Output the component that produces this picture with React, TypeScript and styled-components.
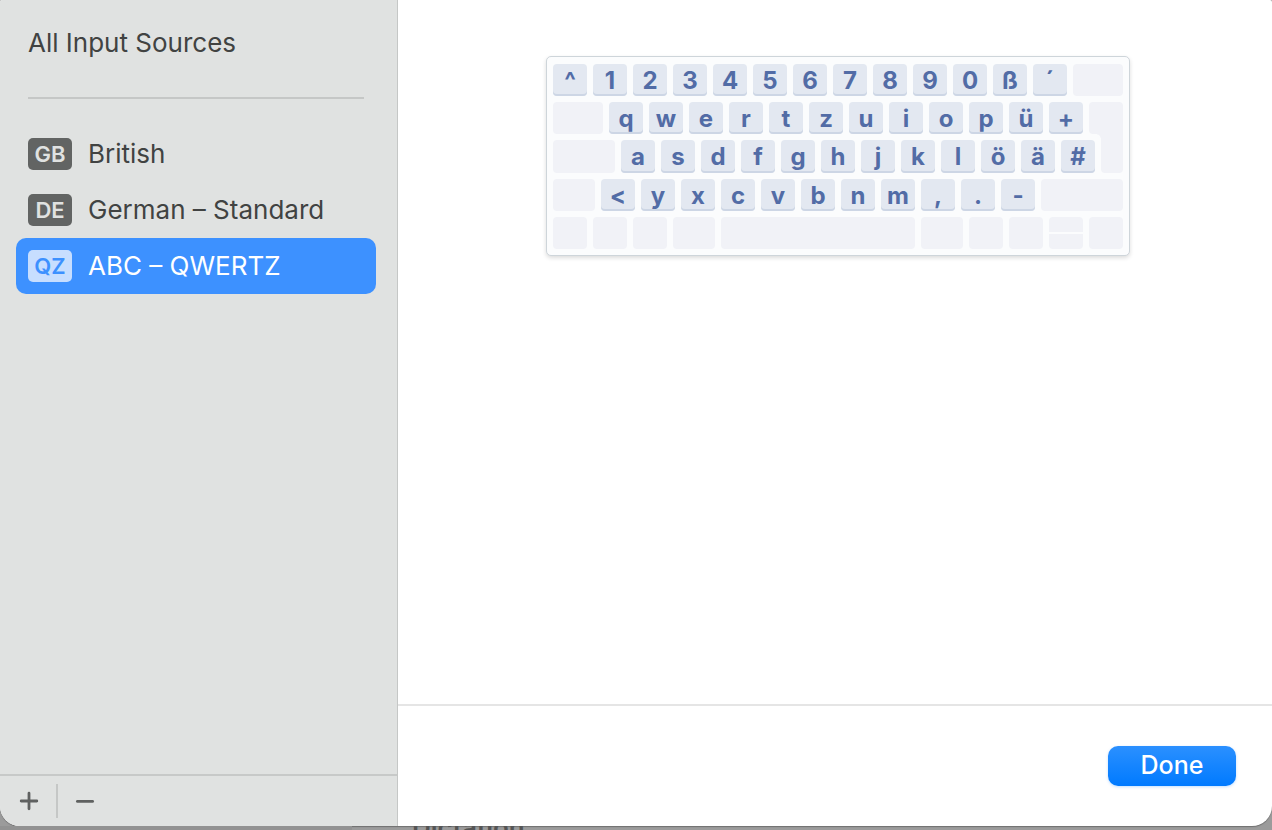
import React from "react";
import styled, { createGlobalStyle } from "styled-components";

const GlobalStyle = createGlobalStyle`
  *, *::before, *::after { box-sizing: border-box; }
  body {
    margin: 0;
    overflow: hidden;
    background: #9b9b9b;
    font-family: Inter, "Liberation Sans", sans-serif;
    color: #414342;
  }
  button { font: inherit; color: inherit; border: 0; margin: 0; padding: 0; background: none; }
`;

const Screen = styled.div`
  display: flex;
  flex-direction: column;
  height: 100vh;
`;

const Sheet = styled.div`
  flex: 1;
  display: flex;
  min-height: 0;
  overflow: hidden;
  background: #fff;
  border-radius: 2px 2px 20px 20px;
  box-shadow: 0 1px 1px #707070;
`;

const Sidebar = styled.aside`
  flex: 0 0 398px;
  display: flex;
  flex-direction: column;
  background: #e0e2e1;
  border-right: 1px solid #c5c7c6;
`;

const SourceNav = styled.nav`
  flex: 1;
  padding: 24px 21px 0 16px;
`;

const AllSources = styled.button`
  display: block;
  padding: 0 12px;
  font-size: 26px;
  line-height: 38px;
`;

const Divider = styled.hr`
  height: 2px;
  margin: 35px 12px 27px;
  border: 0;
  background: #c5c7c6;
`;

const SourceList = styled.ul`
  margin: 0;
  padding: 0;
  list-style: none;
`;

const Source = styled.button<{ $selected?: boolean }>`
  display: flex;
  align-items: center;
  gap: 16px;
  width: 100%;
  height: 56px;
  padding: 0 12px;
  border-radius: 10px;
  font-size: 26px;
  line-height: 32px;
  white-space: nowrap;
  color: ${(p) => (p.$selected ? "#fff" : "inherit")};
  background: ${(p) => (p.$selected ? "#3d91ff" : "none")};
`;

const Badge = styled.span<{ $selected?: boolean }>`
  width: 44px;
  height: 32px;
  border-radius: 5px;
  font-size: 22px;
  font-weight: 600;
  line-height: 32px;
  text-align: center;
  color: ${(p) => (p.$selected ? "#3d91ff" : "#e0e2e1")};
  background: ${(p) => (p.$selected ? "#c7deff" : "#626463")};
`;

const Tools = styled.div`
  display: flex;
  align-items: center;
  height: 52px;
  padding-left: 2px;
  border-top: 2px solid #c7c9c8;
`;

const Tool = styled.button`
  display: flex;
  align-items: center;
  justify-content: center;
  width: 54px;
  height: 50px;
`;

const ToolDivider = styled.span`
  width: 2px;
  height: 34px;
  background: #c5c7c6;
`;

const Main = styled.main`
  flex: 1;
  display: flex;
  flex-direction: column;
  min-width: 0;
`;

const Preview = styled.section`
  flex: 1;
  display: flex;
  justify-content: center;
  align-items: flex-start;
  padding: 56px 0 0 6px;
`;

const Keyboard = styled.div`
  display: flex;
  flex-direction: column;
  gap: 6px;
  width: 584px;
  padding: 7px 6px 6px;
  border: 1px solid #ced5da;
  border-radius: 5px;
  background: #fbfcfd;
  box-shadow: 0 2px 4px rgba(0, 0, 0, 0.14);
`;

const KeyRow = styled.div<{ $height: number }>`
  display: flex;
  gap: 6px;
  height: ${(p) => p.$height}px;
`;

const Key = styled.kbd`
  flex: 0 0 34px;
  border-radius: 4px;
  font-family: inherit;
  font-size: 24px;
  font-weight: 700;
  line-height: 34px;
  text-align: center;
  color: #526ca6;
  background: #e3e8f1;
  box-shadow: inset 0 -2px #cdd6e5;
`;

const BlankKey = styled.span<{ $width?: number }>`
  flex: ${(p) => (p.$width ? `0 0 ${p.$width}px` : "1")};
  border-radius: 4px;
  background: #f1f2f7;
`;

const EnterTop = styled(BlankKey)`
  border-radius: 4px 4px 0 4px;
`;

/* The lower half of the enter key reaches up over the row gap to join the upper half,
   with a rounded inner corner where the two meet. */
const EnterBottom = styled(BlankKey)`
  position: relative;
  border-radius: 0 0 4px 4px;
  &::before {
    content: "";
    position: absolute;
    inset: -6px 0 100% 0;
    background: inherit;
  }
  &::after {
    content: "";
    position: absolute;
    top: -6px;
    right: 100%;
    width: 4px;
    height: 4px;
    background: radial-gradient(circle at 0 100%, transparent 3px, #f1f2f7 4px);
  }
`;

const ArrowPair = styled.span`
  flex: 0 0 34px;
  display: flex;
  flex-direction: column;
  gap: 2px;
`;

const ArrowUp = styled(BlankKey)`
  border-radius: 4px 4px 0 0;
`;

const ArrowDown = styled(BlankKey)`
  border-radius: 0 0 4px 4px;
`;

const Actions = styled.footer`
  display: flex;
  align-items: center;
  justify-content: flex-end;
  height: 122px;
  padding: 0 36px;
  border-top: 2px solid #e5e5e5;
`;

const DoneButton = styled.button`
  width: 128px;
  height: 40px;
  padding-bottom: 2px;
  border-radius: 10px;
  font-size: 25px;
  font-weight: 500;
  line-height: 38px;
  color: #fff;
  background: linear-gradient(#2b90ff, #007aff);
  box-shadow: 0 1px 3px rgba(0, 122, 255, 0.25);
`;

const Behind = styled.div`
  display: flex;
  align-items: center;
  height: 4px;
  overflow: hidden;
`;

const BehindSide = styled.span`
  flex: 0 0 352px;
  height: 4px;
  background: #929292;
`;

const BehindLabel = styled.span`
  padding-left: 60px;
  font-size: 26px;
  font-weight: 600;
  line-height: 32px;
  color: #555;
`;

const sources = [
  { code: "GB", name: "British" },
  { code: "DE", name: "German – Standard" },
  { code: "QZ", name: "ABC – QWERTZ", selected: true },
];

const keys = (text: string) => text.split(" ").map((k) => <Key key={k}>{k}</Key>);

export default function App() {
  return (
    <>
      <GlobalStyle />
      <Screen>
        <Sheet role="dialog" aria-label="Input Sources">
          <Sidebar>
            <SourceNav>
              <AllSources type="button">All Input Sources</AllSources>
              <Divider />
              <SourceList>
                {sources.map((s) => (
                  <li key={s.code}>
                    <Source type="button" $selected={s.selected} aria-pressed={!!s.selected}>
                      <Badge $selected={s.selected}>{s.code}</Badge>
                      {s.name}
                    </Source>
                  </li>
                ))}
              </SourceList>
            </SourceNav>
            <Tools>
              <Tool type="button" aria-label="Add">
                <svg width="20" height="20" viewBox="0 0 20 20" stroke="#5f6160" strokeWidth="2.8" strokeLinecap="round">
                  <path d="M2.2 10H17.8M10 2.2V17.8" />
                </svg>
              </Tool>
              <ToolDivider />
              <Tool type="button" aria-label="Remove">
                <svg width="20" height="20" viewBox="0 0 20 20" stroke="#5f6160" strokeWidth="2.8" strokeLinecap="round">
                  <path d="M2.4 10.4H17.6" />
                </svg>
              </Tool>
            </Tools>
          </Sidebar>
          <Main>
            <Preview aria-label="Keyboard layout">
              <Keyboard>
                <KeyRow $height={32}>
                  {keys("^ 1 2 3 4 5 6 7 8 9 0 ß ´")}
                  <BlankKey />
                </KeyRow>
                <KeyRow $height={32}>
                  <BlankKey $width={50} />
                  {keys("q w e r t z u i o p ü +")}
                  <EnterTop />
                </KeyRow>
                <KeyRow $height={33}>
                  <BlankKey $width={62} />
                  {keys("a s d f g h j k l ö ä #")}
                  <EnterBottom />
                </KeyRow>
                <KeyRow $height={32}>
                  <BlankKey $width={42} />
                  {keys("< y x c v b n m , . -")}
                  <BlankKey />
                </KeyRow>
                <KeyRow $height={32}>
                  <BlankKey $width={34} />
                  <BlankKey $width={34} />
                  <BlankKey $width={34} />
                  <BlankKey $width={42} />
                  <BlankKey />
                  <BlankKey $width={42} />
                  <BlankKey $width={34} />
                  <BlankKey $width={34} />
                  <ArrowPair>
                    <ArrowUp />
                    <ArrowDown />
                  </ArrowPair>
                  <BlankKey $width={34} />
                </KeyRow>
              </Keyboard>
            </Preview>
            <Actions>
              <DoneButton type="button">Done</DoneButton>
            </Actions>
          </Main>
        </Sheet>
        <Behind>
          <BehindSide />
          <BehindLabel>Dictation</BehindLabel>
        </Behind>
      </Screen>
    </>
  );
}
